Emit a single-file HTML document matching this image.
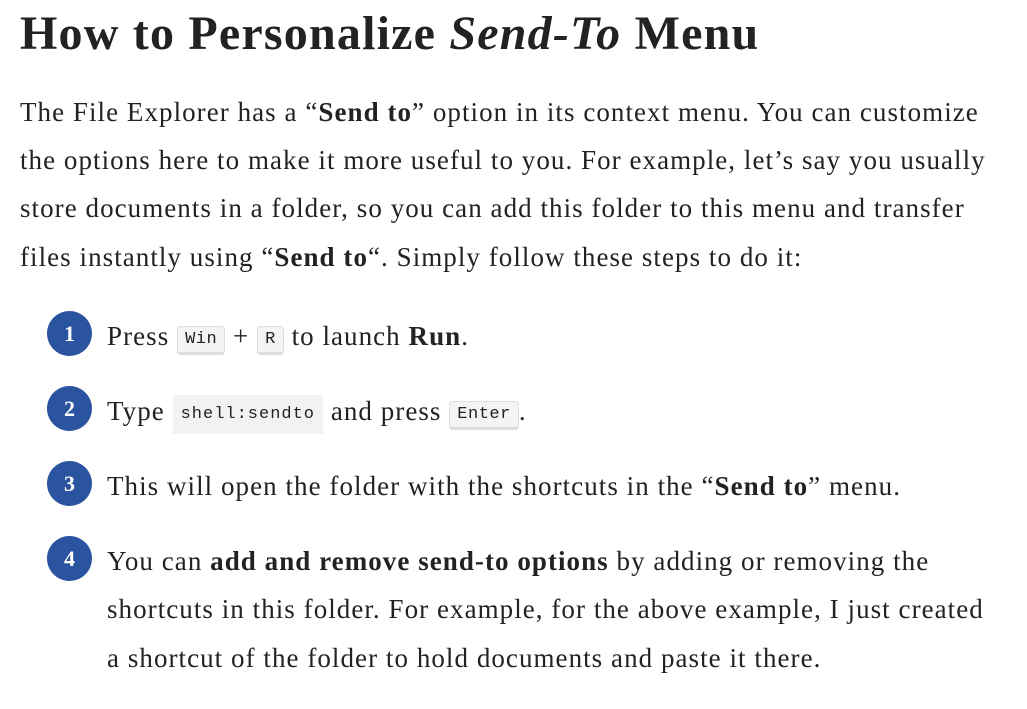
<!DOCTYPE html>
<html><head><meta charset="utf-8"><style>
body{margin:0;background:#fff;color:#222;width:1027px;height:709px;overflow:hidden;position:relative;font-family:"Liberation Serif",serif}
h1{position:absolute;left:20px;top:4px;margin:0;font-size:48px;font-weight:bold;white-space:nowrap;letter-spacing:1.2px;color:#222;line-height:60px}
.l{position:absolute;left:20px;font-size:27px;white-space:nowrap;line-height:48px;letter-spacing:1.05px}
.li{left:107px}
.c{position:absolute;left:47px;width:45px;height:45px;border-radius:50%;background:#2a53a0;color:#fff;font-weight:bold;font-size:22px;text-align:center;line-height:45px;letter-spacing:0}
kbd{font-family:"Liberation Mono",monospace;font-size:17px;background:#f4f4f4;border:1px solid #ddd;border-bottom:3px solid #ddd;border-radius:4px;padding:3px 7px;letter-spacing:0.5px;position:relative;top:-2px}
code{font-family:"Liberation Mono",monospace;font-size:17px;background:#f2f2f2;padding:10px 8px;letter-spacing:1px;position:relative;top:-2px}
</style></head><body>
<h1>How to Personalize <i>Send-To</i> Menu</h1>
<div class="l" style="top:88px">The File Explorer has a “<b>Send to</b>” option in its context menu. You can customize</div>
<div class="l" style="top:136px">the options here to make it more useful to you. For example, let’s say you usually</div>
<div class="l" style="top:184px">store documents in a folder, so you can add this folder to this menu and transfer</div>
<div class="l" style="top:233px">files instantly using “<b>Send to</b>“. Simply follow these steps to do it:</div>

<div class="c" style="top:311px">1</div>
<div class="l li" style="top:312px">Press <kbd>Win</kbd> + <kbd>R</kbd> to launch <b>Run</b>.</div>
<div class="c" style="top:386px">2</div>
<div class="l li" style="top:387px">Type <code>shell:sendto</code> and press <kbd>Enter</kbd>.</div>
<div class="c" style="top:461px">3</div>
<div class="l li" style="top:462px">This will open the folder with the shortcuts in the “<b>Send to</b>” menu.</div>
<div class="c" style="top:536px">4</div>
<div class="l li" style="top:537px">You can <b>add and remove send-to options</b> by adding or removing the</div>
<div class="l li" style="top:585px">shortcuts in this folder. For example, for the above example, I just created</div>
<div class="l li" style="top:634px">a shortcut of the folder to hold documents and paste it there.</div>
</body></html>
